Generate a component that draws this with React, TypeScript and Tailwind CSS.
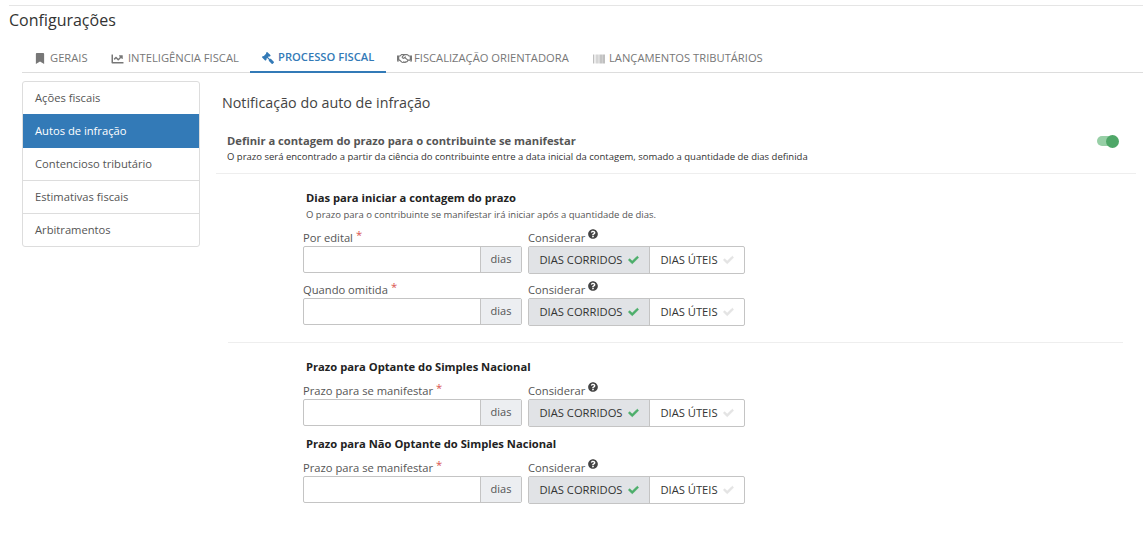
import { FaBarcode, FaBookmark, FaChartLine, FaCheck, FaGavel, FaQuestionCircle, FaRegHandshake } from "react-icons/fa"

const tabs = [
  { label: "GERAIS", icon: <FaBookmark className="w-[10px] h-[11px]" />, width: "w-[77px] pl-[13px]", gap: "gap-[5px]" },
  { label: "INTELIGÊNCIA FISCAL", icon: <FaChartLine className="w-[13px] h-[12px]" />, width: "w-[151px] pl-[12px]", gap: "gap-[4px]" },
  { label: "PROCESSO FISCAL", icon: <FaGavel className="w-[12px] h-[12px] -scale-x-100" />, width: "w-[136px] pl-[12px]", gap: "gap-[4px]", active: true },
  { label: "FISCALIZAÇÃO ORIENTADORA", icon: <FaRegHandshake className="w-[15px] h-[13px]" />, width: "w-[196px] pl-[11px]", gap: "gap-[2px]" },
  { label: "LANÇAMENTOS TRIBUTÁRIOS", icon: <FaBarcode className="w-[12px] h-[12px] text-[#999]" />, width: "w-[195px] pl-[11px]", gap: "gap-[4px]" },
]

const menu = ["Ações fiscais", "Autos de infração", "Contencioso tributário", "Estimativas fiscais", "Arbitramentos"]

function DaysField({ label }: { label: string }) {
  return (
    <div className="flex gap-[6px]">
      <div className="w-[219px]">
        <div className="h-[19px] text-[11.2px] leading-[22px] text-[#555]">
          {label}
          <span className="relative -top-[3px] ml-[3px] text-[#d9534f]">*</span>
        </div>
        <div className="flex h-[27px] border border-[#c4c4c4] rounded-[2px] bg-white">
          <div className="flex-1" />
          <div className="w-[41px] border-l border-[#c4c4c4] bg-[#eceef1] text-center text-[11px] leading-[24px] text-[#555]">dias</div>
        </div>
      </div>
      <div className="w-[217px]">
        <div className="flex h-[19px] items-start gap-[3px] text-[11.2px] leading-[22px] text-[#555]">
          Considerar
          <FaQuestionCircle className="mt-[2px] w-[10px] h-[10px] text-[#444]" />
        </div>
        <div className="flex h-[28px] border border-[#c4c4c4] rounded-[2px] bg-white text-[11.2px] leading-[26px] text-[#333]">
          <div className="flex w-[121px] items-center justify-center gap-[5px] border-r border-[#c4c4c4] bg-[#e1e3e6]">
            DIAS CORRIDOS <FaCheck className="w-[11px] h-[10px] text-[#4cae6a] [stroke-width:30]" />
          </div>
          <div className="flex flex-1 items-center justify-center gap-[5px]">
            DIAS ÚTEIS <FaCheck className="w-[11px] h-[10px] text-[#e4e4e4] [stroke-width:30]" />
          </div>
        </div>
      </div>
    </div>
  )
}

export default function App() {
  return (
    <div className="h-[535px] overflow-hidden bg-white pt-[5px] font-['Open_Sans',sans-serif] text-[#333]">
      <div className="ml-[9px] border-t border-[#e5e5e5] pt-[3px] text-[16px] leading-[22px]">Configurações</div>

      <div className="ml-[22px] mt-[13px] flex h-[29px] border-b border-[#ddd]">
        {tabs.map((t) => (
          <div
            key={t.label}
            className={`flex h-[29px] shrink-0 items-center ${t.width} ${t.gap} text-[11.2px] ${
              t.active ? "border-b-2 border-[#337ab7] text-[#337ab7] font-semibold" : "text-[#777] font-normal"
            }`}
          >
            {t.icon}
            {t.label}
          </div>
        ))}
      </div>

      <div className="mt-[8px] flex">
        <div className="ml-[22px] h-[166px] w-[178px] shrink-0 overflow-hidden rounded-[3px] border border-[#ddd] text-[11.2px] text-[#555]">
          {menu.map((item, i) => (
            <div
              key={item}
              className={`px-[12px] ${i === 0 ? "h-[32px] leading-[31px]" : i === 1 ? "h-[34px] bg-[#337ab7] text-white leading-[34px] font-medium" : "h-[33px] leading-[32px]"} ${
                i >= 2 ? "border-b border-[#ddd] last:border-b-0" : ""
              }`}
            >
              {item}
            </div>
          ))}
        </div>

        <div className="ml-[16px] flex-1 pr-[7px]">
          <div className="ml-[6px] mt-[12px] h-[20px] text-[14.3px] leading-[20px] text-[#444]">Notificação do auto de infração</div>

          <div className="mt-[19px] flex justify-between border-b border-[#eee] pb-[9px] pl-[11px] pr-[18px]">
            <div>
              <div className="text-[11.2px] font-bold leading-[18px] text-[#555]">Definir a contagem do prazo para o contribuinte se manifestar</div>
              <div className="text-[9.5px] leading-[14px] text-[#333]">
                O prazo será encontrado a partir da ciência do contribuinte entre a data inicial da contagem, somado a quantidade de dias definida
              </div>
            </div>
            <div className="relative mt-[4px] h-[10px] w-[21px] rounded-full bg-[#97cfa6]">
              <div className="absolute -right-[1px] -top-[1px] h-[13px] w-[13px] rounded-full bg-[#4fa768]" />
            </div>
          </div>

          <div className="ml-[87px] mt-[16px]">
            <div className="ml-[3px] text-[11.2px] font-bold leading-[16px] text-[#222]">Dias para iniciar a contagem do prazo</div>
            <div className="ml-[3px] mt-[2px] text-[9.5px] leading-[14px] text-[#555]">O prazo para o contribuinte se manifestar irá iniciar após a quantidade de dias.</div>
            <div className="mt-[5px] flex flex-col gap-[5px]">
              <DaysField label="Por edital" />
              <DaysField label="Quando omitida" />
            </div>
          </div>

          <div className="ml-[12px] mr-[13px] mt-[16px] border-t border-[#eee]" />

          <div className="ml-[87px] mt-[16px]">
            <div className="ml-[3px] text-[11.2px] font-bold leading-[16px] text-[#222]">Prazo para Optante do Simples Nacional</div>
            <div className="mt-[5px]"><DaysField label="Prazo para se manifestar" /></div>
            <div className="ml-[3px] mt-[9px] text-[11.2px] font-bold leading-[16px] text-[#222]">Prazo para Não Optante do Simples Nacional</div>
            <div className="mt-[5px]"><DaysField label="Prazo para se manifestar" /></div>
          </div>
        </div>
      </div>
    </div>
  )
}
